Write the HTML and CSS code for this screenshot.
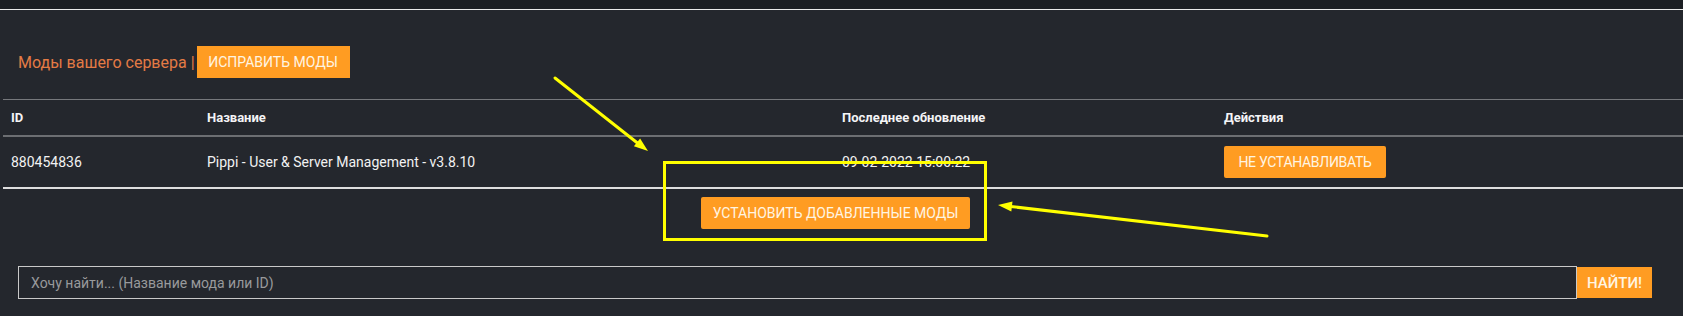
FILE: index.html
```html
<!DOCTYPE html>
<html lang="ru">
<head>
<meta charset="utf-8">
<title>Моды вашего сервера</title>
<link rel="stylesheet" href="styles.css">
</head>
<body>
<div class="topbar"></div>
<main class="page">
  <div class="title-row">
    <span class="title">Моды вашего сервера |</span>
    <button class="btn btn-fix">ИСПРАВИТЬ МОДЫ</button>
  </div>
  <table class="mods">
    <colgroup>
      <col class="c-id"><col class="c-name"><col class="c-date"><col class="c-act">
    </colgroup>
    <thead>
      <tr><th>ID</th><th>Название</th><th>Последнее обновление</th><th>Действия</th></tr>
    </thead>
    <tbody>
      <tr>
        <td>880454836</td>
        <td>Pippi - User &amp; Server Management - v3.8.10</td>
        <td>09-02-2022 15:00:22</td>
        <td><button class="btn btn-row">НЕ УСТАНАВЛИВАТЬ</button></td>
      </tr>
    </tbody>
  </table>
  <div class="install-row">
    <button class="btn btn-install">УСТАНОВИТЬ ДОБАВЛЕННЫЕ МОДЫ</button>
  </div>
  <form class="search" onsubmit="return false">
    <input class="search-input" type="text" placeholder="Хочу найти... (Название мода или ID)">
    <button class="btn btn-search">НАЙТИ!</button>
  </form>
</main>
<svg class="annot" width="1683" height="316" viewBox="0 0 1683 316">
  <rect x="664.5" y="162.5" width="321" height="77" fill="none" stroke="#ffff00" stroke-width="3"/>
  <line x1="555" y1="78" x2="640" y2="145" stroke="#ffff00" stroke-width="3" stroke-linecap="round"/>
  <polygon points="648,151 633.9,146.3 640.1,138.4" fill="#ffff00"/>
  <line x1="1267" y1="236" x2="1008" y2="206.2" stroke="#ffff00" stroke-width="3" stroke-linecap="round"/>
  <polygon points="998,205 1012.5,201.6 1011.3,211.6" fill="#ffff00"/>
</svg>
</body>
</html>
```
FILE: styles.css
```css
* { box-sizing: border-box; }
html, body {
  margin: 0;
  padding: 0;
  background: #24272d;
  font-family: Roboto, "Noto Sans", "Liberation Sans", sans-serif;
  color: #ffffff;
  overflow: hidden;
}
body { position: relative; width: 1683px; height: 316px; }
.topbar {
  height: 10px;
  background: #1b1e23;
  border-bottom: 1px solid #e9e9e9;
}
.page { padding-top: 36px; }
.title-row {
  display: flex;
  align-items: center;
  margin-left: 18px;
  height: 32px;
}
.title {
  font-size: 16px;
  color: #e47b45;
  margin-right: 2px;
}
.btn {
  border: 0;
  background: #ff9c22;
  color: #fff5e2;
  font-family: Roboto, "Noto Sans", "Liberation Sans", sans-serif;
  font-size: 14px;
  padding: 0 12px;
  height: 32px;
  cursor: pointer;
}
.btn-fix { width: 153px; padding: 0; }
.mods {
  margin-top: 21px;
  margin-left: 3px;
  width: 1680px;
  border-spacing: 0;
  border-collapse: separate;
  table-layout: fixed;
}
.c-id { width: 196px; }
.c-name { width: 635px; }
.c-date { width: 382px; }
.c-act { width: 467px; }
.mods th {
  text-align: left;
  font-size: 13px;
  font-weight: 700;
  line-height: 35px;
  padding: 0 8px;
  border-top: 1px solid #76787c;
  border-bottom: 2px solid #6c6e72;
  color: #f4f4f6;
}
.mods td {
  font-size: 14px;
  line-height: 32px;
  padding: 9px 8px;
  border-bottom: 2px solid #dedede;
  color: #f2f2f2;
  vertical-align: middle;
}
.btn-row { width: 162px; padding: 0; border-radius: 2px; display: block; letter-spacing: -0.3px; }
.install-row {
  display: flex;
  justify-content: center;
  padding-right: 12px;
  margin-top: 8px;
}
.btn-install { width: 269px; padding: 0; border-radius: 2px; }
.search {
  display: flex;
  align-items: center;
  margin: 37px 0 0 18px;
}
.search-input {
  width: 1559px;
  height: 33px;
  background: transparent;
  border: 1px solid #c9c9c9;
  padding: 0 12px;
  font-family: Roboto, "Noto Sans", "Liberation Sans", sans-serif;
  font-size: 14px;
  color: #ddd;
  outline: none;
}
.search-input::placeholder { color: #999a9c; }
.btn-search {
  width: 75px;
  height: 31px;
  padding: 0;
  font-size: 15px;
  font-weight: 500;
}
.annot {
  position: absolute;
  top: 0;
  left: 0;
  pointer-events: none;
}
```
